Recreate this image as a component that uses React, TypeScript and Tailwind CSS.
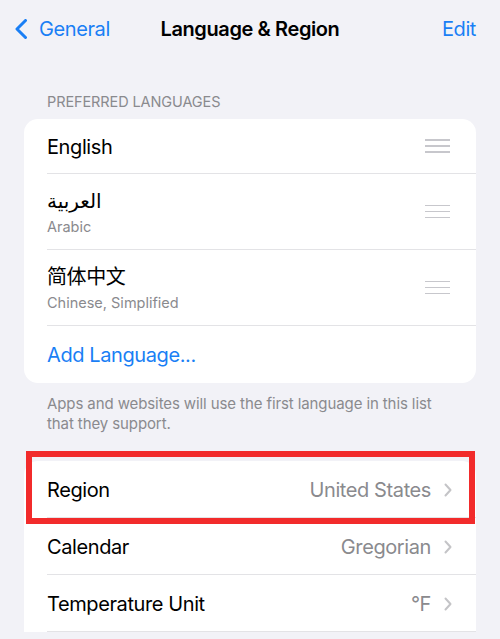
type Language = {
  name: string;
  subtitle?: string;
};

const languages: Language[] = [
  { name: 'English' },
  { name: 'العربية', subtitle: 'Arabic' },
  { name: '简体中文', subtitle: 'Chinese, Simplified' },
];

const regionRows = [
  { label: 'Region', value: 'United States', highlighted: true },
  { label: 'Calendar', value: 'Gregorian' },
  { label: 'Temperature Unit', value: '°F' },
];

function DragHandle() {
  return (
    <div className="flex w-[25px] flex-col gap-[4.5px]">
      <span className="h-[1.5px] w-full bg-[#c7c7cc]" />
      <span className="h-[1.5px] w-full bg-[#c7c7cc]" />
      <span className="h-[1.5px] w-full bg-[#c7c7cc]" />
    </div>
  );
}

function BackChevron() {
  return (
    <svg width="14" height="20" viewBox="0 0 14 20" fill="none" className="shrink-0">
      <path d="M11.5 1.5 L3 10 L11.5 18.5" stroke="currentColor" strokeWidth="3" strokeLinecap="round" strokeLinejoin="round" />
    </svg>
  );
}

function RowChevron() {
  return (
    <svg width="8" height="14" viewBox="0 0 8 14" fill="none" className="shrink-0">
      <path d="M1.5 1.5 L6.5 7 L1.5 12.5" stroke="#c4c4c7" strokeWidth="2" strokeLinecap="round" strokeLinejoin="round" />
    </svg>
  );
}

export default function App() {
  return (
    <div className="min-h-[639px] w-[500px] overflow-hidden bg-[#f2f2f7] font-['Inter','DejaVu_Sans','Noto_Sans_CJK_SC',sans-serif] text-black antialiased">
      {/* Navigation bar */}
      <div className="grid h-[58px] grid-cols-[1fr_auto_1fr] items-center px-[14px]">
        <div className="flex items-center gap-[11px] text-[#1a7ff5]">
          <BackChevron />
          <span className="text-[20px] tracking-[-0.4px]">General</span>
        </div>
        <h1 className="text-[20px] font-semibold tracking-[-0.4px]">Language &amp; Region</h1>
        <div className="pr-[10px] text-right text-[20px] tracking-[-0.4px] text-[#1a7ff5]">Edit</div>
      </div>

      {/* Preferred languages */}
      <p className="mt-[35px] mb-[8px] px-[47px] text-[14.5px] leading-[18px] uppercase tracking-[-0.1px] text-[#8a8a8e]">
        Preferred Languages
      </p>
      <div className="mx-[24px] overflow-hidden rounded-[14px] bg-white">
        {languages.map((lang) => (
          <div key={lang.name} className="pl-[23px]">
            <div
              className={`flex items-center justify-between border-b border-[#e3e3e6] pr-[26px] ${
                lang.subtitle ? 'h-[76px]' : 'h-[55px]'
              }`}
            >
              <div className="pt-[1px]">
                <p className="text-[20px] leading-6 tracking-[-0.4px]">{lang.name}</p>
                {lang.subtitle && (
                  <p className="mt-[5px] text-[14.5px] leading-[18px] text-[#8a8a8e]">{lang.subtitle}</p>
                )}
              </div>
              <DragHandle />
            </div>
          </div>
        ))}
        <div className="flex h-[57px] items-center pl-[23px] pt-[1px] text-[20px] tracking-[-0.4px] text-[#1a7ff5]">
          Add Language...
        </div>
      </div>
      <p className="px-[47px] pt-[11px] text-[15px] leading-5 tracking-[-0.1px] text-[#8a8a8e]">
        Apps and websites will use the first language in this list that they support.
      </p>

      {/* Region settings */}
      <div className="mx-[24px] mt-[27px] rounded-t-[14px] bg-white">
        {regionRows.map((row) => (
          <div key={row.label} className="relative pl-[23px]">
            <div className="flex h-[57px] items-center justify-between border-b border-[#e3e3e6] pr-[24px] pt-[1px]">
              <span className="text-[20px] tracking-[-0.4px]">{row.label}</span>
              <div className="flex items-center gap-[13px] text-[#8a8a8e]">
                <span className="text-[20px] tracking-[-0.4px]">{row.value}</span>
                <RowChevron />
              </div>
            </div>
            {row.highlighted && (
              <div className="pointer-events-none absolute top-[-10px] right-[1px] bottom-[-6px] left-[2px] border-[6px] border-[#f22b2b]" />
            )}
          </div>
        ))}
      </div>
    </div>
  );
}
